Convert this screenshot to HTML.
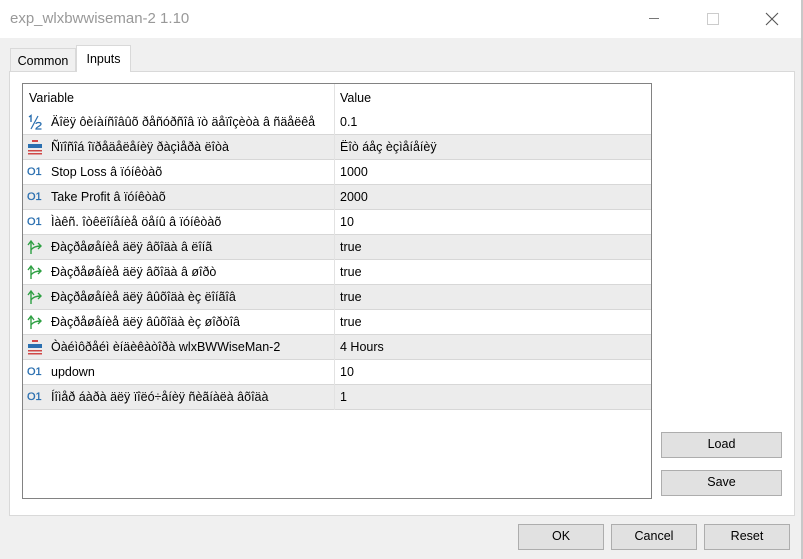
<!DOCTYPE html>
<html><head><meta charset="utf-8"><style>
*{margin:0;padding:0;box-sizing:border-box}
body{width:803px;height:559px;background:#f0f0f0;font-family:"Liberation Sans",sans-serif;font-size:12.5px;color:#000;position:relative;overflow:hidden}
.abs{position:absolute}
#title{left:0;top:0;width:803px;height:38px;background:#fff}
#title .t{left:10px;top:10px;font-size:15px;color:#999}
#rb{right:0;top:0;width:2px;height:559px;background:#c8c8c8}
.tab{position:absolute;border:1px solid #d9d9d9;border-bottom:none;text-align:center}
#panel{left:9px;top:71px;width:786px;height:445px;background:#fff;border:1px solid #d9d9d9}
#grid{left:22px;top:83px;width:630px;height:416px;border:1px solid #828282;background:#fff;overflow:hidden}
.row{position:absolute;left:0;width:628px;height:25px;border-bottom:1px solid #d7d7d7}
.row.g{background:#ececec}
.row .v{position:absolute;left:28px;top:5px;white-space:nowrap}
.row .val{position:absolute;left:317px;top:5px;white-space:nowrap}
.row .ic{position:absolute;left:4px;top:4px;width:16px;height:16px}
.row .cd{position:absolute;left:311px;top:0;width:1px;height:25px;background:#e2e2e2}
.btn{position:absolute;background:#e1e1e1;border:1px solid #adadad;text-align:center;line-height:23px}
.o1{font-size:11px;color:#2a6fb0;position:absolute;left:4px;top:6px;-webkit-text-stroke:0.3px #2a6fb0}
</style></head><body>
<div id="title" class="abs"><div class="t abs">exp_wlxbwwiseman-2 1.10</div>
<div class="abs" style="left:649px;top:18px;width:10px;height:1px;background:#777"></div>
<div class="abs" style="left:707px;top:13px;width:12px;height:12px;border:1px solid #ccc"></div>
<svg class="abs" style="left:765px;top:12px" width="14" height="14"><path d="M1 1L13 13M13 1L1 13" stroke="#555" stroke-width="1.1"/></svg>
</div>
<div id="rb" class="abs"></div>
<div class="tab" style="left:10px;top:48px;width:66px;height:23px;background:#f0f0f0;line-height:24px">Common</div>
<div id="panel" class="abs"></div>
<div class="tab" style="left:76px;top:45px;width:55px;height:27px;background:#fff;line-height:26px;z-index:2">Inputs</div>
<div id="grid" class="abs">
 <div class="row" style="top:0;height:26px;border-bottom:none"><div class="v" style="left:6px;top:7px">Variable</div><div class="val" style="top:7px">Value</div><div class="cd" style="height:26px"></div></div>
 <div class="row" style="top:26px"><svg class="ic" viewBox="0 0 16 16"><path d="M2 3L4 1.5V8" stroke="#2a6fb0" stroke-width="1.4" fill="none"/><path d="M11 2L4 15" stroke="#2a6fb0" stroke-width="1.2"/><path d="M9 10C9 8 14 8 14 10C14 12 9 13 9 15H14.5" stroke="#2a6fb0" stroke-width="1.3" fill="none"/></svg><div class="v">Äîëÿ ôèíàíñîâûõ ðåñóðñîâ ïò äåïîçèòà â ñäåëêå</div><div class="val">0.1</div><div class="cd"></div></div>
 <div class="row g" style="top:51px"><svg class="ic" viewBox="0 0 16 16"><rect x="5" y="1" width="6" height="2" fill="#d04848"/><rect x="1" y="5" width="14" height="4" fill="#2a6fb0"/><rect x="1" y="11" width="14" height="1.5" fill="#d04848"/><rect x="1" y="14" width="14" height="1.5" fill="#d04848"/></svg><div class="v">Ñïîñîá îïðåäåëåíèÿ ðàçìåðà ëîòà</div><div class="val">Ëîò áåç èçìåíåíèÿ</div><div class="cd"></div></div>
 <div class="row" style="top:76px"><div class="o1">O1</div><div class="v">Stop Loss â ïóíêòàõ</div><div class="val">1000</div><div class="cd"></div></div>
 <div class="row g" style="top:101px"><div class="o1">O1</div><div class="v">Take Profit â ïóíêòàõ</div><div class="val">2000</div><div class="cd"></div></div>
 <div class="row" style="top:126px"><div class="o1">O1</div><div class="v">Ìàêñ. îòêëîíåíèå öåíû â ïóíêòàõ</div><div class="val">10</div><div class="cd"></div></div>
 <div class="row g" style="top:151px"><svg class="ic" viewBox="0 0 16 16"><path d="M4 15V3M1 6L4 2L7 6M4 11C6 8 9 7 14 7M11 4L14 7L11 10" stroke="#2ea043" stroke-width="1.4" fill="none"/></svg><div class="v">Ðàçðåøåíèå äëÿ âõîäà â ëîíã</div><div class="val">true</div><div class="cd"></div></div>
 <div class="row" style="top:176px"><svg class="ic" viewBox="0 0 16 16"><path d="M4 15V3M1 6L4 2L7 6M4 11C6 8 9 7 14 7M11 4L14 7L11 10" stroke="#2ea043" stroke-width="1.4" fill="none"/></svg><div class="v">Ðàçðåøåíèå äëÿ âõîäà â øîðò</div><div class="val">true</div><div class="cd"></div></div>
 <div class="row g" style="top:201px"><svg class="ic" viewBox="0 0 16 16"><path d="M4 15V3M1 6L4 2L7 6M4 11C6 8 9 7 14 7M11 4L14 7L11 10" stroke="#2ea043" stroke-width="1.4" fill="none"/></svg><div class="v">Ðàçðåøåíèå äëÿ âûõîäà èç ëîíãîâ</div><div class="val">true</div><div class="cd"></div></div>
 <div class="row" style="top:226px"><svg class="ic" viewBox="0 0 16 16"><path d="M4 15V3M1 6L4 2L7 6M4 11C6 8 9 7 14 7M11 4L14 7L11 10" stroke="#2ea043" stroke-width="1.4" fill="none"/></svg><div class="v">Ðàçðåøåíèå äëÿ âûõîäà èç øîðòîâ</div><div class="val">true</div><div class="cd"></div></div>
 <div class="row g" style="top:251px"><svg class="ic" viewBox="0 0 16 16"><rect x="5" y="1" width="6" height="2" fill="#d04848"/><rect x="1" y="5" width="14" height="4" fill="#2a6fb0"/><rect x="1" y="11" width="14" height="1.5" fill="#d04848"/><rect x="1" y="14" width="14" height="1.5" fill="#d04848"/></svg><div class="v">Òàéìôðåéì èíäèêàòîðà wlxBWWiseMan-2</div><div class="val">4 Hours</div><div class="cd"></div></div>
 <div class="row" style="top:276px"><div class="o1">O1</div><div class="v">updown</div><div class="val">10</div><div class="cd"></div></div>
 <div class="row g" style="top:301px"><div class="o1">O1</div><div class="v">Íîìåð áàðà äëÿ ïîëó÷åíèÿ ñèãíàëà âõîäà</div><div class="val">1</div><div class="cd"></div></div>
</div>
<div class="btn" style="left:661px;top:432px;width:121px;height:26px">Load</div>
<div class="btn" style="left:661px;top:470px;width:121px;height:26px">Save</div>
<div class="btn" style="left:518px;top:524px;width:86px;height:26px">OK</div>
<div class="btn" style="left:611px;top:524px;width:86px;height:26px">Cancel</div>
<div class="btn" style="left:704px;top:524px;width:86px;height:26px">Reset</div>
</body></html>
